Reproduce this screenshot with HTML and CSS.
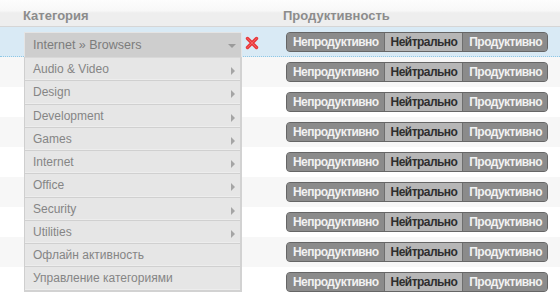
FILE: index.html
```html
<!DOCTYPE html>
<html lang="ru">
  <head>
    <meta charset="UTF-8" />
    <meta name="viewport" content="width=device-width, initial-scale=1.0" />
    <title>Категории</title>
    <link rel="stylesheet" href="styles.css">
  </head>
  <body>
    <div class="grid">
      <div class="head">
        <div class="col-cat">Категория</div>
        <div class="col-prod">Продуктивность</div>
      </div>

      <div class="row selected">
        <div class="col-cat">
          <div class="picker">
            <div class="select">Internet » Browsers<span class="caret"></span></div>
            <ul class="menu">
              <li class="sub">Audio &amp; Video</li>
              <li class="sub">Design</li>
              <li class="sub">Development</li>
              <li class="sub">Games</li>
              <li class="sub">Internet</li>
              <li class="sub">Office</li>
              <li class="sub">Security</li>
              <li class="sub">Utilities</li>
              <li>Офлайн активность</li>
              <li>Управление категориями</li>
            </ul>
          </div>
          <svg class="remove" width="14" height="14" viewBox="0 0 14 14">
            <path d="M2.5 2.5 L11.5 11.5 M11.5 2.5 L2.5 11.5" stroke="#e8383b" stroke-width="3.4" stroke-linecap="round" />
            <path d="M2.5 2.5 L11.5 11.5 M11.5 2.5 L2.5 11.5" stroke="#ff7a7a" stroke-width="1" stroke-linecap="round" opacity="0.6" />
          </svg>
        </div>
        <div class="col-prod">
          <div class="seg"><span>Непродуктивно</span><span class="on">Нейтрально</span><span>Продуктивно</span></div>
        </div>
      </div>

      <div class="row alt">
        <div class="col-cat"></div>
        <div class="col-prod">
          <div class="seg"><span>Непродуктивно</span><span class="on">Нейтрально</span><span>Продуктивно</span></div>
        </div>
      </div>
      <div class="row">
        <div class="col-cat"></div>
        <div class="col-prod">
          <div class="seg"><span>Непродуктивно</span><span class="on">Нейтрально</span><span>Продуктивно</span></div>
        </div>
      </div>
      <div class="row alt">
        <div class="col-cat"></div>
        <div class="col-prod">
          <div class="seg"><span>Непродуктивно</span><span class="on">Нейтрально</span><span>Продуктивно</span></div>
        </div>
      </div>
      <div class="row">
        <div class="col-cat"></div>
        <div class="col-prod">
          <div class="seg"><span>Непродуктивно</span><span class="on">Нейтрально</span><span>Продуктивно</span></div>
        </div>
      </div>
      <div class="row alt">
        <div class="col-cat"></div>
        <div class="col-prod">
          <div class="seg"><span>Непродуктивно</span><span class="on">Нейтрально</span><span>Продуктивно</span></div>
        </div>
      </div>
      <div class="row">
        <div class="col-cat"></div>
        <div class="col-prod">
          <div class="seg"><span>Непродуктивно</span><span class="on">Нейтрально</span><span>Продуктивно</span></div>
        </div>
      </div>
      <div class="row alt">
        <div class="col-cat"></div>
        <div class="col-prod">
          <div class="seg"><span>Непродуктивно</span><span class="on">Нейтрально</span><span>Продуктивно</span></div>
        </div>
      </div>
      <div class="row">
        <div class="col-cat"></div>
        <div class="col-prod">
          <div class="seg"><span>Непродуктивно</span><span class="on">Нейтрально</span><span>Продуктивно</span></div>
        </div>
      </div>
    </div>
  </body>
</html>
```

FILE: styles.css
```css
* {
  box-sizing: border-box;
}

body {
  margin: 0;
  background: #fff;
  font-family: "Liberation Sans", Arial, sans-serif;
}

.head {
  display: flex;
  height: 27px;
  background: linear-gradient(#fdfdfd, #f8f8f8 40%, #eeeeee 50%, #eeeeee);
  border-bottom: 1px solid #d6d6d6;
  font-size: 13px;
  font-weight: bold;
  color: #8c8c8c;
}

.head .col-cat,
.head .col-prod {
  padding-top: 7px;
  line-height: 18px;
}

.col-cat {
  width: 283px;
  flex-shrink: 0;
  padding-left: 23px;
  display: flex;
  align-items: flex-start;
}

.row {
  display: flex;
  height: 30px;
}

.row .col-cat {
  padding-left: 24px;
  padding-top: 5px;
}

.row .col-prod {
  padding-left: 3px;
  padding-top: 5px;
}

.alt {
  background: #f7f7f7;
}

.selected {
  background: #d9eaf5;
  border-bottom: 1px dotted #8fc8e6;
}

/* dropdown */
.picker {
  position: relative;
  width: 218px;
}

.select {
  height: 25px;
  line-height: 24px;
  padding-left: 8px;
  background: #cecece;
  border: 1px solid #e4e4e4;
  border-bottom: none;
  font-size: 12.5px;
  color: #7c7c7c;
  position: relative;
}

.caret {
  position: absolute;
  right: 5px;
  top: 11px;
  border-left: 4px solid transparent;
  border-right: 4px solid transparent;
  border-top: 4px solid #9a9a9a;
}

.menu {
  position: absolute;
  top: 25px;
  left: 0;
  width: 218px;
  margin: 0;
  padding: 0;
  list-style: none;
  background: #e6e6e6;
  border-left: 1px solid #cfcfcf;
  border-right: 2px solid #d2d2d2;
  border-bottom: 2px solid #d2d2d2;
  z-index: 2;
}

.menu li {
  height: 23.25px;
  line-height: 23px;
  padding-left: 8px;
  font-size: 12px;
  color: #858585;
  border-top: 1px solid #d0d0d0;
  border-bottom: 1px solid #ededed;
  position: relative;
}

.menu li:first-child {
  border-top-color: #d8d8d8;
}

.menu .sub::after {
  content: "";
  position: absolute;
  right: 5px;
  top: 9px;
  border-top: 4px solid transparent;
  border-bottom: 4px solid transparent;
  border-left: 4px solid #a5a5a5;
}

.remove {
  margin-left: 3px;
  margin-top: 4px;
}

/* segmented switch */
.seg {
  display: inline-flex;
  border: 1px solid #666;
  border-radius: 4px;
  overflow: hidden;
  background: #8b8b8b;
}

.seg span {
  padding: 0 5px 0 6px;
  line-height: 18px;
  font-size: 12px;
  font-weight: bold;
  letter-spacing: -0.55px;
  color: #f2f2f2;
  background: #8b8b8b;
}

.seg span + span {
  border-left: 1px solid #6e6e6e;
}

.seg .on {
  background: #b6b6b6;
  color: #2e2e2e;
}
```
